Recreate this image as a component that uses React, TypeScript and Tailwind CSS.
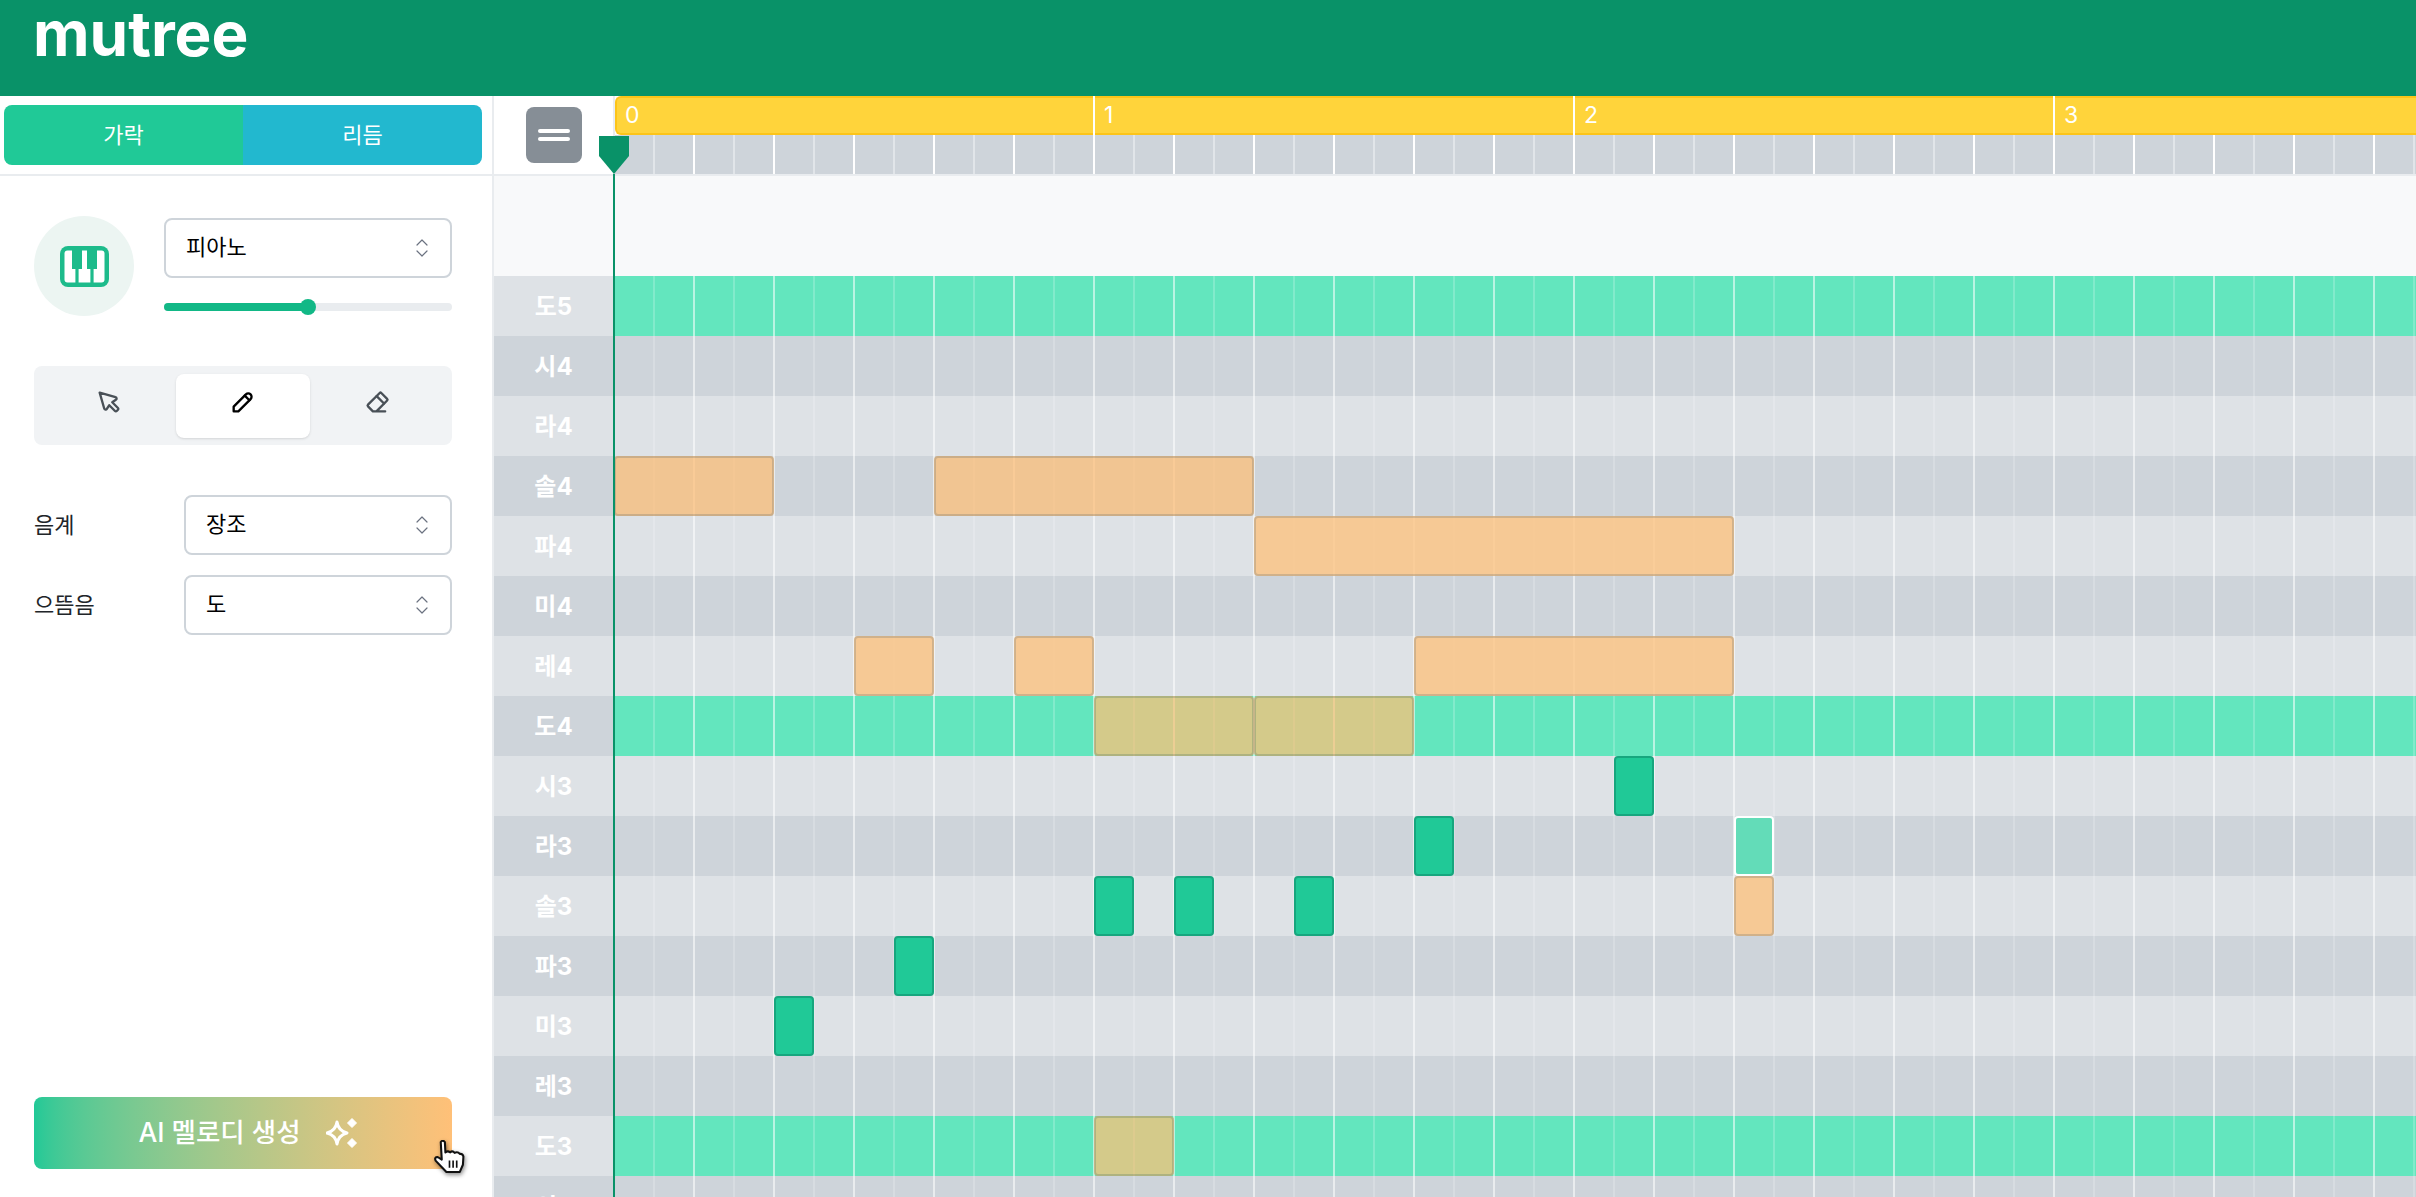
import { ChevronsUpDown } from 'lucide-react'
import { TbEraser, TbPencil, TbPointer } from 'react-icons/tb'

type NoteKind = 'orange' | 'green' | 'ghost'
type Note = { start: number; len: number; kind: NoteKind }
type Row = { label: string; notes: Note[] }

const ROWS: Row[] = [
  { label: '도5', notes: [] },
  { label: '시4', notes: [] },
  { label: '라4', notes: [] },
  {
    label: '솔4',
    notes: [
      { start: 0, len: 4, kind: 'orange' },
      { start: 8, len: 8, kind: 'orange' },
    ],
  },
  { label: '파4', notes: [{ start: 16, len: 12, kind: 'orange' }] },
  { label: '미4', notes: [] },
  {
    label: '레4',
    notes: [
      { start: 6, len: 2, kind: 'orange' },
      { start: 10, len: 2, kind: 'orange' },
      { start: 20, len: 8, kind: 'orange' },
    ],
  },
  {
    label: '도4',
    notes: [
      { start: 12, len: 4, kind: 'orange' },
      { start: 16, len: 4, kind: 'orange' },
    ],
  },
  { label: '시3', notes: [{ start: 25, len: 1, kind: 'green' }] },
  {
    label: '라3',
    notes: [
      { start: 20, len: 1, kind: 'green' },
      { start: 28, len: 1, kind: 'ghost' },
    ],
  },
  {
    label: '솔3',
    notes: [
      { start: 12, len: 1, kind: 'green' },
      { start: 14, len: 1, kind: 'green' },
      { start: 17, len: 1, kind: 'green' },
      { start: 28, len: 1, kind: 'orange' },
    ],
  },
  { label: '파3', notes: [{ start: 7, len: 1, kind: 'green' }] },
  { label: '미3', notes: [{ start: 4, len: 1, kind: 'green' }] },
  { label: '레3', notes: [] },
  { label: '도3', notes: [{ start: 12, len: 2, kind: 'orange' }] },
  { label: '시2', notes: [] },
]

const NOTE_CLASS: Record<NoteKind, string> = {
  orange: 'bg-[#ffc078] border-[#cb9f69] opacity-[.73]',
  green: 'bg-[#20c997] border-[#17a67e]',
  ghost: 'bg-[#63dcb8] border-white',
}

const CELLS = Array.from({ length: 46 }, (_, i) => i)

function FakeSelect({ value, className }: { value: string; className: string }) {
  return (
    <div
      className={`flex h-[60px] items-center justify-between rounded-lg border-2 border-[#ced4da] bg-white pb-px pl-5 pr-4 text-[22px] text-black ${className}`}
    >
      <span>{value}</span>
      <ChevronsUpDown size={24} strokeWidth={1.2} className="text-[#6b7280]" />
    </div>
  )
}

function PianoIcon() {
  return (
    <svg width="49" height="41" viewBox="0 0 49 41">
      <rect width="49" height="41" rx="8" fill="#1dbb8b" />
      <rect x="4.5" y="4.5" width="40" height="32" rx="3" fill="#ffffff" />
      <path d="M12 4h10v19h-3.4v14h-3.2V23H12zM27 4h10v19h-3.4v14h-3.2V23H27z" fill="#1dbb8b" />
    </svg>
  )
}

function SparkleIcon() {
  return (
    <svg width="32" height="30" viewBox="0 0 32 30" fill="none">
      <path
        d="M11 4C12 10.5 15 13.5 21 15C15 16.5 12 19.5 11 26C10 19.5 7 16.5 1 15C7 13.5 10 10.5 11 4Z"
        stroke="white"
        strokeWidth="3"
        strokeLinejoin="round"
      />
      <path d="M26 0.5L30.5 5L26 9.5L21.5 5Z M26 20.5L30.5 25L26 29.5L21.5 25Z" fill="white" stroke="white" strokeLinejoin="round" />
    </svg>
  )
}

function HandCursor() {
  return (
    <svg
      width="31"
      height="34"
      viewBox="0 0 30 33"
      className="absolute bottom-[-5px] right-[-13px] drop-shadow-[1px_2px_2px_rgba(0,0,0,0.45)]"
    >
      <path
        d="M6.5 2Q8.5-.5 10.5 2L11 12Q13.5 10 15.5 12Q18 10 20 12.5Q23 11 25 13.5Q28 13 28.5 16L28 24L25 31L12 31L1.5 20Q0 16.5 3.5 16.5L7.5 19Z"
        fill="white"
        stroke="#111"
        strokeWidth="2"
        strokeLinejoin="round"
      />
      <path d="M15 20v7M18.5 20v7M22 20v7" stroke="#111" strokeWidth="1.6" />
    </svg>
  )
}

function Sidebar() {
  return (
    <aside className="flex w-[494px] shrink-0 flex-col border-r-2 border-[#e9ecef] bg-white">
      <div className="flex h-20 items-center border-b-2 border-[#e9ecef] pl-1 pr-[10px]">
        <div className="flex h-[60px] flex-1 overflow-hidden rounded-lg text-[22px] text-white">
          <div className="flex flex-1 items-center justify-center bg-[#20c997]">가락</div>
          <div className="flex flex-1 items-center justify-center bg-[#22b8cf]">리듬</div>
        </div>
      </div>

      <div className="flex flex-1 flex-col pb-7 pl-[34px] pr-10 pt-10">
        <div className="flex items-start gap-[30px]">
          <div className="flex h-[100px] w-[100px] shrink-0 items-center justify-center rounded-full bg-[#ecf5f2]">
            <PianoIcon />
          </div>
          <div className="mt-0.5 flex-1">
            <FakeSelect value="피아노" className="" />
            <div className="relative mt-[25px] h-2 rounded-full bg-[#e9ecef]">
              <div className="h-2 w-[144px] rounded-full bg-[#12b886]" />
              <div className="absolute left-[136px] top-[-4px] h-4 w-4 rounded-full bg-[#12b886]" />
            </div>
          </div>
        </div>

        <div className="mt-[50px] grid grid-cols-3 rounded-lg bg-[#f1f3f5] pb-[7px] pl-2 pr-2 pt-2">
          <div className="flex h-16 items-center justify-center pb-2 text-[#495057]">
            <TbPointer size={28} />
          </div>
          <div className="flex h-16 items-center justify-center rounded-lg bg-white pb-2 text-black shadow">
            <TbPencil size={28} />
          </div>
          <div className="flex h-16 items-center justify-center pb-2 text-[#495057]">
            <TbEraser size={28} />
          </div>
        </div>

        <div className="mt-[50px] flex flex-col gap-5 text-[22px] text-[#212529]">
          <div className="flex items-center justify-between">
            <span>음계</span>
            <FakeSelect value="장조" className="w-[268px]" />
          </div>
          <div className="flex items-center justify-between">
            <span>으뜸음</span>
            <FakeSelect value="도" className="w-[268px]" />
          </div>
        </div>

        <button className="relative mt-auto flex h-[72px] items-center justify-center gap-[25px] rounded-lg bg-gradient-to-r from-[#20c997] to-[#ffc078] pl-[10px] text-[26.5px] font-medium text-white">
          <span>AI 멜로디 생성</span>
          <SparkleIcon />
          <HandCursor />
        </button>
      </div>
    </aside>
  )
}

function Ruler() {
  return (
    <div className="flex h-20 shrink-0 border-b-2 border-[#e9ecef] bg-white">
      <div className="flex w-[121px] shrink-0 items-center justify-center border-r-2 border-[#e9ecef]">
        <div className="flex h-14 w-14 flex-col items-center justify-center gap-1 rounded-lg bg-[#868e96]">
          <div className="h-1 w-8 rounded-full bg-white" />
          <div className="h-1 w-8 rounded-full bg-white" />
        </div>
      </div>
      <div className="flex flex-1 flex-col overflow-hidden">
        <div className="flex h-[39px] shrink-0">
          {[0, 1, 2, 3].map((bar) => (
            <div key={bar} className="flex w-[480px] shrink-0 border-r-2 border-white">
              <div
                className={`flex flex-1 items-center border-y-2 border-[#fcc419] bg-[#ffd43b] text-[23px] text-white ${
                  bar === 0 ? 'rounded-l-md border-l-2 pl-2' : 'pl-[9px]'
                }`}
              >
                {bar}
              </div>
            </div>
          ))}
        </div>
        <div className="flex h-[39px] shrink-0 bg-[#ced4da]">
          {CELLS.map((i) => (
            <div
              key={i}
              className={`h-full w-10 shrink-0 border-r-2 ${i % 2 === 1 ? 'border-white' : 'border-white/40'}`}
            />
          ))}
        </div>
      </div>
    </div>
  )
}

function PianoRow({ row, index }: { row: Row; index: number }) {
  const isDo = row.label.startsWith('도')
  const shade = index % 2 === 0 ? 'bg-[#dee2e6]' : 'bg-[#ced4da]'
  return (
    <div className="flex h-[60px] shrink-0">
      <div className={`flex w-[121px] shrink-0 items-center justify-center pr-0.5 pt-0.5 text-[24px] font-bold text-white ${shade}`}>
        {row.label}
      </div>
      <div className={`relative flex flex-1 overflow-hidden ${isDo ? 'bg-[#63e6be]' : shade}`}>
        {CELLS.map((i) => (
          <div
            key={i}
            className={`h-full w-10 shrink-0 border-r-2 ${i % 2 === 1 ? 'border-white/55' : 'border-white/20'}`}
          />
        ))}
        {row.notes.map((n) => (
          <div
            key={n.start}
            className={`absolute inset-y-0 rounded border-2 ${NOTE_CLASS[n.kind]}`}
            style={{ left: n.start * 40 - 1, width: n.len * 40 }}
          />
        ))}
      </div>
    </div>
  )
}

function Editor() {
  return (
    <main className="relative flex min-w-0 flex-1 flex-col overflow-hidden">
      <Ruler />
      <div className="h-[100px] shrink-0 bg-[#f8f9fa]" />
      {ROWS.map((row, i) => (
        <PianoRow key={row.label} row={row} index={i} />
      ))}
      {/* playhead */}
      <svg width="30" height="38" viewBox="0 0 30 38" className="absolute left-[105px] top-10">
        <path d="M0 0H30V20L15 38L0 20Z" fill="#099268" />
      </svg>
      <div className="absolute bottom-0 left-[119px] top-[78px] w-0.5 bg-[#099268]" />
    </main>
  )
}

export default function App() {
  return (
    <div className="flex h-screen w-screen flex-col overflow-hidden bg-white font-['Inter','Noto_Sans_CJK_KR',sans-serif]">
      <header className="h-24 shrink-0 bg-[#099268] pl-[33px] pt-[3px] text-[62px] font-bold leading-none text-white">
        mutree
      </header>
      <div className="flex min-h-0 flex-1">
        <Sidebar />
        <Editor />
      </div>
    </div>
  )
}
